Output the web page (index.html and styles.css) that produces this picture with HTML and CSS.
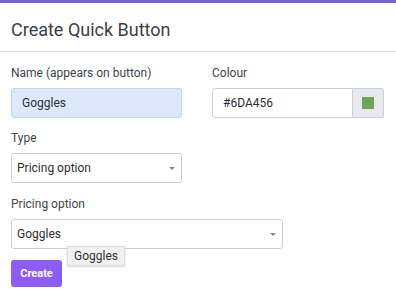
FILE: index.html
```html
<!DOCTYPE html>
<html lang="en">
<head>
    <meta charset="UTF-8">
    <title>Create Quick Button</title>
    <link rel="stylesheet" href="styles.css">
</head>
<body>
    <div class="topbar"></div>
    <div class="modal">
        <div class="modal-header">
            <h1>Create Quick Button</h1>
        </div>
        <form class="modal-body">
            <div class="row">
                <div class="field name-field">
                    <label>Name (appears on button)</label>
                    <input class="input filled" type="text" value="Goggles">
                </div>
                <div class="field colour-field">
                    <label>Colour</label>
                    <div class="input-group">
                        <input class="input" type="text" value="#6DA456">
                        <span class="swatch-btn"><span class="swatch"></span></span>
                    </div>
                </div>
            </div>
            <div class="field type-field">
                <label>Type</label>
                <div class="select">Pricing option<span class="caret"></span></div>
            </div>
            <div class="field option-field">
                <label>Pricing option</label>
                <div class="select">Goggles<span class="caret"></span></div>
                <div class="tooltip">Goggles</div>
            </div>
            <button class="create-btn" type="button">Create</button>
        </form>
    </div>
</body>
</html>
```

FILE: styles.css
```css
body {
    margin: 0;
    background: #fff;
    font-family: Roboto, "Liberation Sans", sans-serif;
    color: #343a40;
    overflow: hidden;
}

.topbar {
    height: 3px;
    background: #7b61d9;
}

.modal-header {
    padding: 16px 11px 0;
    height: 32px;
    border-bottom: 1px solid #d6dde3;
}

h1 {
    margin: 0;
    font-size: 18px;
    font-weight: 400;
    color: #3a3f45;
}

.modal-body {
    padding: 13px 11px 0;
    position: relative;
}

.row {
    display: flex;
    gap: 30px;
}

.field {
    display: flex;
    flex-direction: column;
    margin-bottom: 13px;
}

.row .field {
    margin-bottom: 12px;
}

label {
    font-size: 12px;
    line-height: 16px;
    margin-bottom: 7px;
    color: #40454b;
}

.name-field {
    width: 171px;
}

.colour-field {
    width: 172px;
}

.input {
    box-sizing: border-box;
    height: 30px;
    border: 1px solid #c8d0d8;
    border-radius: 3px;
    padding: 0 10px;
    font-family: inherit;
    font-size: 12px;
    color: #2b2f33;
    outline: none;
    width: 100%;
}

.input.filled {
    background: #dde9fb;
    border-color: #c3d3e8;
}

.input-group {
    display: flex;
}

.input-group .input {
    border-radius: 3px 0 0 3px;
    flex: 1;
    min-width: 0;
}

.swatch-btn {
    box-sizing: border-box;
    width: 31px;
    height: 30px;
    background: #e7e9ec;
    border: 1px solid #c8d0d8;
    border-left: none;
    border-radius: 0 3px 3px 0;
    display: flex;
    align-items: center;
    justify-content: center;
}

.swatch {
    width: 12px;
    height: 12px;
    background: #6da456;
}

.select {
    box-sizing: border-box;
    height: 30px;
    border: 1px solid #c8d0d8;
    border-radius: 3px;
    padding: 0 5px;
    font-size: 12px;
    line-height: 28px;
    color: #2b2f33;
    position: relative;
}

.caret {
    position: absolute;
    right: 6px;
    top: 13px;
    border-left: 3px solid transparent;
    border-right: 3px solid transparent;
    border-top: 3px solid #888;
}

.type-field {
    width: 171px;
}

.option-field {
    width: 272px;
    position: relative;
    margin-bottom: 11px;
}

.tooltip {
    position: absolute;
    left: 56px;
    top: 50px;
    background: #f1f1f1;
    border: 1px solid #dcdcdc;
    box-shadow: 0 1px 2px rgba(0,0,0,0.15);
    font-size: 12px;
    padding: 2px 6px;
    color: #333;
}

.create-btn {
    background: #8b5cf6;
    color: #fff;
    border: none;
    border-radius: 3px;
    font-family: inherit;
    font-size: 11px;
    font-weight: 700;
    padding: 0;
    height: 27px;
    width: 51px;
}
```
